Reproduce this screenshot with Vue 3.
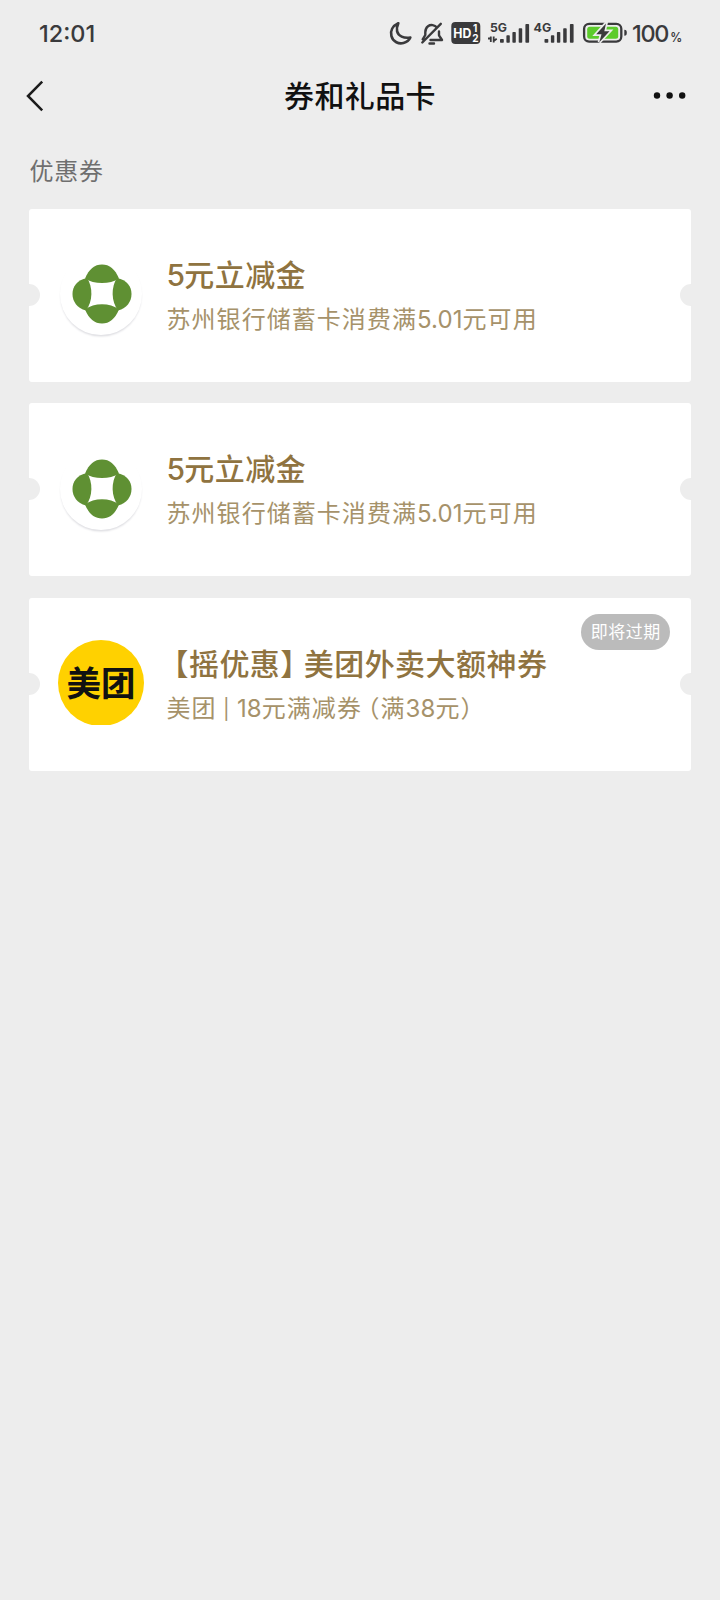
<script setup>
const coupons = [
  { id: 1, brand: 'bank' },
  { id: 2, brand: 'bank' },
  { id: 3, brand: 'meituan', tag: '即将过期' },
]
const bars = [
  [0, 39, 3.8],
  [6.4, 35.3, 3.4],
  [12.4, 32, 3.4],
  [18.7, 28.3, 3.5],
  [25.4, 24, 3.7],
]
</script>

<template>
  <main class="screen">
    <header class="status">
      <span class="clock">12:01</span>
      <svg class="indicators" width="300" height="60" viewBox="385 0 300 60">
        <g fill="none" stroke="#3a3a3c" stroke-width="2.7" stroke-linecap="round" stroke-linejoin="round">
          <path d="M398.3 23.3C392.5 26 390 31 391.4 36c1.6 6 7.6 8.300 12 7 3.500-.9 5.800-3 6.900-5.500-6.500 1-12-1.300-13.200-6.200-.7-3 .1-5.600 1.200-8Z" />
          <path d="M437 27.600c-2.300-2.900-6.300-3.400-9-1.400-2 1.500-2.700 3.700-2.700 6v2.800l-2.600 4.300M422.300 42.500l18.500-18.700M439 31.500v3.800l3 4.700h-11.500M429.500 43.500h4.500" stroke-width="2.400" />
        </g>
        <rect x="451.300" y="22" width="29" height="22" rx="4" fill="#3a3a3c" />
        <text x="453.300" y="38" class="hd" textLength="18" lengthAdjust="spacingAndGlyphs">HD</text>
        <text x="473" y="32" class="hd-index">1</text>
        <text x="472.300" y="42" class="hd-index">2</text>
        <text x="490" y="31.500" class="net" textLength="17" lengthAdjust="spacingAndGlyphs">5G</text>
        <text x="533.500" y="31.500" class="net" textLength="17.700" lengthAdjust="spacingAndGlyphs">4G</text>
        <path d="M488 38.500h2.500M490.800 42V36.500M493.700 36.500V42.500M493.700 41l3-2.300" fill="none" stroke="#3a3a3c" stroke-width="1.800" />
        <g fill="#3a3a3c">
          <rect v-for="b in bars" :key="b[0]" :x="500 + b[0]" :y="b[1]" :width="b[2]" :height="42.700 - b[1]" rx=".8" />
          <rect v-for="b in bars" :key="'s' + b[0]" :x="544.500 + b[0]" :y="b[1]" :width="b[2]" :height="42.700 - b[1]" rx=".8" />
        </g>
        <rect x="584.100" y="23.800" width="37.200" height="17.800" rx="5" fill="none" stroke="#3a3a3c" stroke-width="2.300" />
        <rect x="587.200" y="26.700" width="31" height="12" rx="2.500" fill="#5ccb2c" />
        <path d="M624.300 29.800c2 0 2.500 1 2.500 2.900s-.5 3-2.500 3Z" fill="#3a3a3c" />
        <path d="M606 23.500l-9.800 10.700h5.300l-2.200 8 10.200-11h-5.200Z" fill="#3a3a3c" stroke="#ededed" stroke-width="3.400" paint-order="stroke" />
        <text x="632" y="42.300" class="level" textLength="37.500">100</text>
        <text x="670.300" y="41.700" class="percent" textLength="12" lengthAdjust="spacingAndGlyphs">%</text>
      </svg>
    </header>

    <nav class="navbar">
      <svg class="back" width="18" height="32" viewBox="0 0 18 32">
        <path d="M16.200 1.700L2 16l14.200 14.300" fill="none" stroke="#1c1c1c" stroke-width="2.500" />
      </svg>
      <h1>券和礼品卡</h1>
      <svg class="more" width="34" height="8" viewBox="0 0 34 8">
        <circle cx="4" cy="3.500" r="3.200" />
        <circle cx="16.600" cy="3.500" r="3.200" />
        <circle cx="29.200" cy="3.500" r="3.200" />
      </svg>
    </nav>

    <h2>优惠券</h2>

    <section class="list">
      <article v-for="c in coupons" :key="c.id" class="card">
        <i class="notch left"></i>
        <i class="notch right"></i>
        <div class="logo" :class="c.brand">
          <svg v-if="c.brand === 'bank'" width="60" height="60" viewBox="0 0 60 60">
            <g fill="#5f9033">
              <path d="M13 14.500C17 5 22.500.5 30 .5S43 5 47 14.500C38 20.600 22 20.600 13 14.500Z" />
              <path d="M13 45.500C17 55 22.500 59.500 30 59.500S43 55 47 45.500C38 38.400 22 38.400 13 45.500Z" />
              <path d="M15 14C5 16 .5 22.500.5 30S5 44 14 46.500C21 37 21 23 15 14Z" />
              <path d="M45 14C55 16 59.500 22.500 59.500 30S55 44 46 46.500C39 37 39 23 45 14Z" />
            </g>
          </svg>
          <span v-else class="wordmark">美团</span>
        </div>
        <div class="info">
          <template v-if="c.brand === 'bank'">
            <p class="title"><span class="lead">5</span>元立减金</p>
            <p class="desc">苏州银行储蓄卡消费满<span class="num">5.01</span>元可用</p>
          </template>
          <template v-else>
            <p class="title"><span class="open">【</span>摇优惠<span class="close">】</span>美团外卖大额神券</p>
            <p class="desc">美团<span class="bar"> | </span><span class="num">18</span>元满减券<span class="paren-open">（</span>满<span class="num">38</span>元<span class="paren-close">）</span></p>
          </template>
        </div>
        <span v-if="c.tag" class="tag">{{ c.tag }}</span>
      </article>
    </section>
  </main>
</template>

<style>
body {
  background: #ededed;
}
</style>

<style scoped>
.screen {
  width: 720px;
  height: 1600px;
  overflow: hidden;
  background: #ededed;
  font-family: Inter, "Noto Sans CJK SC", sans-serif;
}
h1, h2, p {
  margin: 0;
  font-weight: 400;
}
.status {
  height: 60px;
  padding: 0 35px 0 39px;
  display: flex;
  align-items: flex-start;
  justify-content: space-between;
}
.clock {
  font-size: 23.5px;
  font-weight: 500;
  line-height: 28px;
  margin-top: 20px;
  color: #3a3a3c;
}
.indicators text {
  fill: #3a3a3c;
}
.indicators .hd {
  font-size: 13px;
  font-weight: 700;
  fill: #fff;
}
.indicators .hd-index {
  font-size: 10px;
  font-weight: 700;
  fill: #fff;
}
.net {
  font-size: 12px;
  font-weight: 700;
}
.level {
  font-size: 23.5px;
  font-weight: 500;
}
.percent {
  font-size: 13.5px;
  font-weight: 600;
}
.navbar {
  height: 72px;
  padding: 0 33px 0 26px;
  display: grid;
  grid-template-columns: 34px 1fr 34px;
  align-items: center;
}
.back {
  margin-top: -1px;
}
.more {
  margin-top: -1px;
  fill: #111;
}
h1 {
  text-align: center;
  font-size: 30px;
  line-height: 44px;
  letter-spacing: 0.4px;
  color: #111;
  font-weight: 500;
  padding-left: 7px;
}
h2 {
  height: 76.5px;
  padding: 22px 0 0 29.5px;
  box-sizing: border-box;
  font-size: 24px;
  line-height: 36px;
  letter-spacing: 0.8px;
  color: #6f6f6f;
}
.list {
  padding: 0 29px;
  display: grid;
  gap: 21.5px;
}
.card {
  position: relative;
  height: 173px;
  display: flex;
  align-items: flex-start;
  background: #fff;
  border-radius: 3px;
}
.notch {
  position: absolute;
  top: 75px;
  width: 22px;
  height: 22px;
  border-radius: 50%;
  background: #ededed;
}
.left {
  left: -11px;
}
.right {
  right: -11px;
}
.logo {
  width: 86px;
  height: 86px;
  margin: 42.5px 0 0 29px;
  border-radius: 50%;
  display: flex;
  justify-content: center;
  align-items: center;
}
.bank {
  width: 82px;
  height: 82px;
  margin: 44.5px 2px 2px 31px;
  box-shadow: 0 2px 2px -0.5px #dfdfe3;
}
.bank svg {
  margin: 0 0 0 1px;
}
.meituan {
  background: #ffd100;
  clip-path: inset(0 0 1px 0);
}
.wordmark {
  font: 700 34.5px/44px "Noto Sans CJK SC", sans-serif;
  color: #111;
  padding-bottom: 5px;
}
.info {
  margin: 44px 0 0 22.5px;
  white-space: nowrap;
}
.title {
  height: 44px;
  font-size: 30px;
  line-height: 44px;
  letter-spacing: 0.45px;
  font-weight: 500;
  color: #8f7340;
}
.desc {
  height: 36px;
  margin-top: 5px;
  font-size: 24px;
  line-height: 36px;
  letter-spacing: 1.05px;
  color: #a6926a;
}
.lead {
  letter-spacing: -0.8px;
}
.num {
  letter-spacing: 0.1px;
}
.bar {
  font-size: 20px;
  line-height: 20px;
  letter-spacing: 0.8px;
  vertical-align: 1px;
}
.open,
.close,
.paren-open,
.paren-close {
  font-feature-settings: "halt";
}
.open {
  margin-left: 7px;
}
.close {
  margin-right: 8px;
}
.paren-open {
  margin-left: 5.5px;
}
.tag {
  position: absolute;
  top: 16px;
  right: 20.8px;
  width: 89px;
  height: 36px;
  border-radius: 18px;
  background: #bbb;
  color: #fff;
  font-size: 17px;
  line-height: 36px;
  letter-spacing: 0.5px;
  text-align: center;
}
</style>
